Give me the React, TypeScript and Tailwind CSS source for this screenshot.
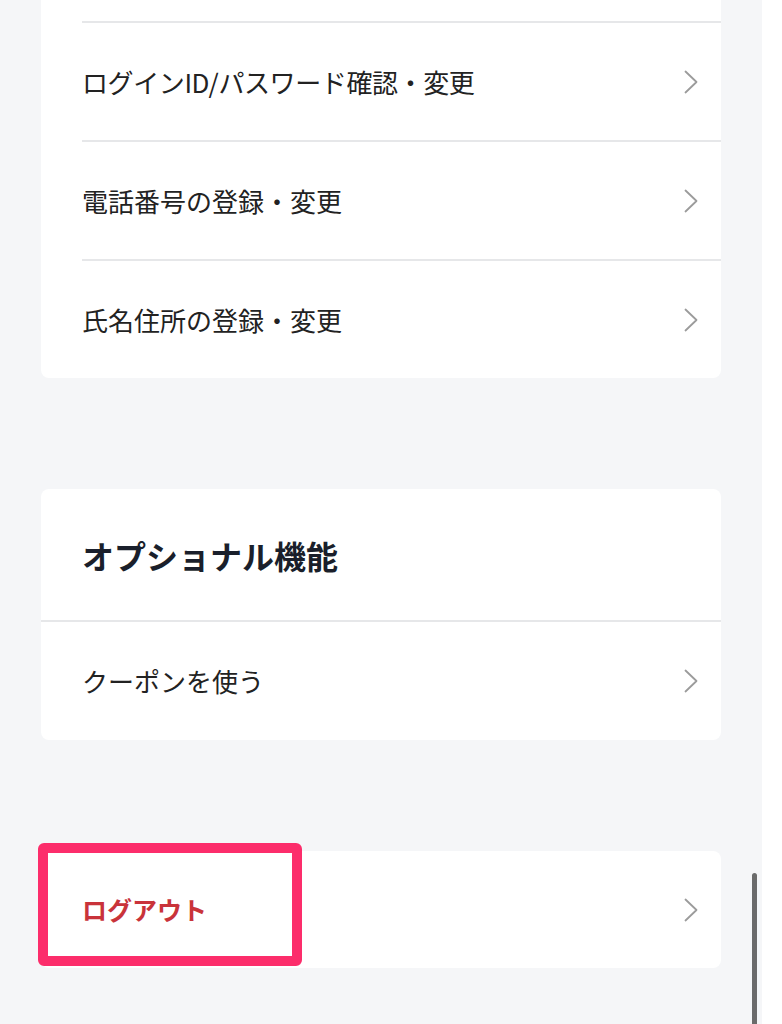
import React from "react";

const font = { fontFamily: '"Noto Sans CJK JP", "Noto Sans", sans-serif' };

function Chevron() {
  return (
    <svg width="14" height="24" viewBox="0 0 14 24" fill="none" className="shrink-0">
      <polyline points="1.5,1.5 12.5,12 1.5,22.5" stroke="#9b9b9b" strokeWidth="1.8" strokeLinecap="round" strokeLinejoin="round" />
    </svg>
  );
}

function Row({ label, className = "h-[117px]", textClass = "text-[26px] text-[#222222]" }: { label: string; className?: string; textClass?: string }) {
  return (
    <div className={`flex items-center justify-between pl-[41px] pr-[23px] ${className}`}>
      <span className={`leading-none ${textClass}`}>{label}</span>
      <Chevron />
    </div>
  );
}

function Divider({ inset = true }: { inset?: boolean }) {
  return <div className={`h-[2px] bg-[#e6e7e9] ${inset ? "ml-[41px]" : ""}`} />;
}

export default function App() {
  return (
    <div className="flex min-h-[1024px] w-[782px] bg-white" style={font}>
      <div className="relative h-[1024px] w-[762px] overflow-hidden bg-[#f5f6f8]">
        <div className="ml-[41px] w-[680px]">
          {/* account card, scrolled so its top is off screen */}
          <section className="rounded-b-lg bg-white">
            <div className="h-[21px]" />
            <Divider />
            <Row label="ログインID/パスワード確認・変更" textClass="text-[26px] tracking-[-0.4px] text-[#222222]" />
            <Divider />
            <Row label="電話番号の登録・変更" />
            <Divider />
            <Row label="氏名住所の登録・変更" />
          </section>

          <section className="mt-[111px] rounded-lg bg-white">
            <div className="flex h-[131px] items-center pl-[41px]">
              <h2 className="text-[32px] font-bold leading-none text-[#1a1f2b]">オプショナル機能</h2>
            </div>
            <Divider inset={false} />
            <Row label="クーポンを使う" className="h-[118px]" />
          </section>

          <section className="relative mt-[111px] rounded-lg bg-white">
            <Row label="ログアウト" className="h-[117px]" textClass="text-[25px] font-bold text-[#c9333a]" />
            <div className="pointer-events-none absolute left-[-3px] top-[-8px] h-[123px] w-[264px] rounded-md border-[10px] border-[#fc2d6b]" />
          </section>
        </div>

        <div className="absolute left-[752px] top-[873px] h-[170px] w-[5px] rounded-full bg-[#6b6b6b]" />
      </div>
    </div>
  );
}
